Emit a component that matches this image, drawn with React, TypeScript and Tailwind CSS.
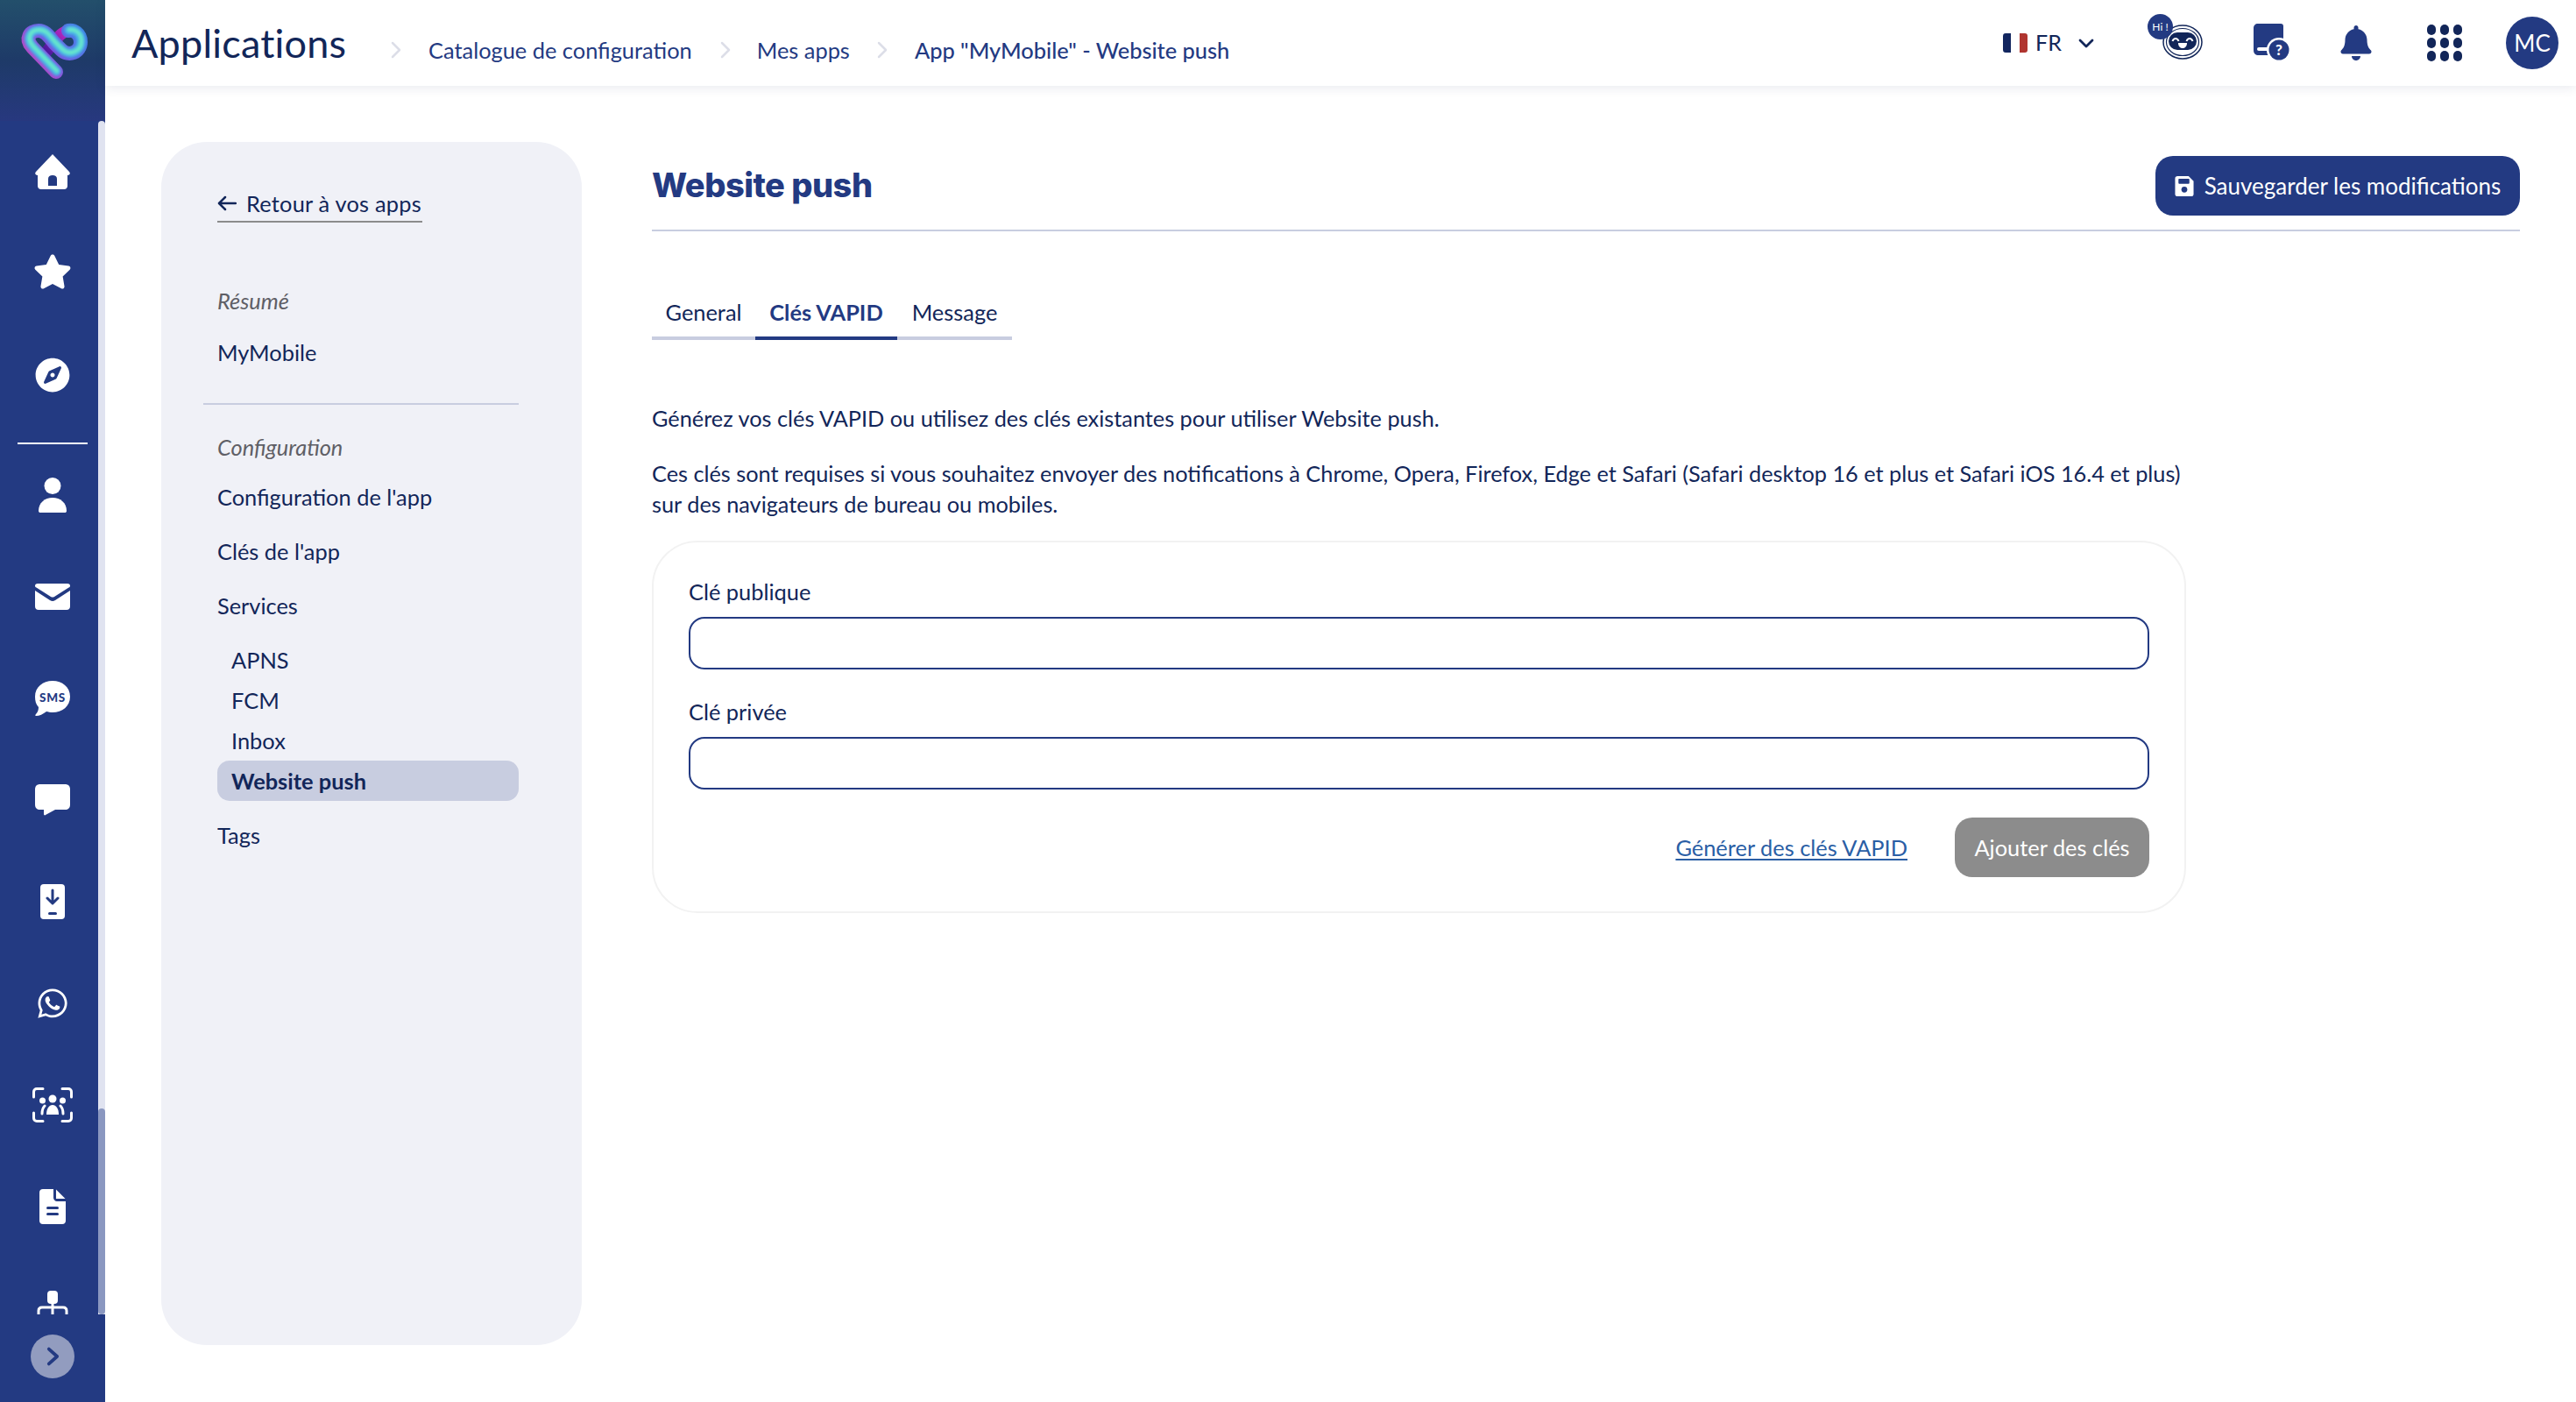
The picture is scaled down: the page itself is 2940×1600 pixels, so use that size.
import React from "react";
import { FaStar, FaCompass, FaWhatsapp, FaBell } from "react-icons/fa";

const font = { fontFamily: '"Lato", sans-serif' };

const FRONT = "M64 82 L37 54 C28 44 34 35 44 35 C52 35 56 42 62 49 L70 57 C78 65 92 60 92 48 C92 38 84 34 78 35";

function Logo() {
  return (
    <svg viewBox="0 0 130 130" className="w-[130px] h-[130px] shrink-0">
      <defs>
        <linearGradient id="edge" gradientUnits="userSpaceOnUse" x1="30" y1="85" x2="95" y2="35">
          <stop offset="0" stopColor="#e23fb4" />
          <stop offset="0.45" stopColor="#7a55e0" />
          <stop offset="1" stopColor="#3f7fe6" />
        </linearGradient>
        <linearGradient id="back" gradientUnits="userSpaceOnUse" x1="80" y1="32" x2="52" y2="58">
          <stop offset="0" stopColor="#d42cc8" />
          <stop offset="1" stopColor="#4a189c" />
        </linearGradient>
        <filter id="soft" x="-30%" y="-30%" width="160%" height="160%"><feGaussianBlur stdDeviation="1.600" /></filter>
      </defs>
      <path d="M82 36 C72 33 66 42 54 58" fill="none" stroke="url(#back)" strokeWidth="13" strokeLinecap="round" />
      <path d={FRONT} fill="none" stroke="url(#edge)" strokeWidth="16" strokeLinecap="round" strokeLinejoin="round" />
      <path d={FRONT} fill="none" stroke="#46ade8" strokeWidth="10" strokeLinecap="round" transform="translate(0.500 -0.500)" filter="url(#soft)" />
      <path d={FRONT} fill="none" stroke="#66e6cc" strokeWidth="5" strokeLinecap="round" transform="translate(1 -1)" filter="url(#soft)" />
    </svg>
  );
}

const Slot = ({ children }: { children: React.ReactNode }) => (
  <div className="h-[116px] shrink-0 flex items-center justify-center text-white">{children}</div>
);

function Sidebar() {
  return (
    <aside className="w-[120px] shrink-0 h-full flex flex-col bg-[#233a82]">
      <div className="h-[138px] shrink-0 bg-gradient-to-b from-[#234f6b] via-[#1e3a68] to-[#27387f]">
        <Logo />
      </div>
      <div className="relative h-[1362px] shrink-0 overflow-hidden">
        <Slot>
          <svg viewBox="0 0 40 40" className="w-[40px] h-[40px] -mt-[1px]" fill="currentColor">
            <path fillRule="evenodd" d="M20 0 L39 20 C40.500 21.500 40 24 37 24 L37 36 C37 38.500 35.500 40 33 40 L7 40 C4.500 40 3 38.500 3 36 L3 24 C0 24 -0.500 21.500 1 20 Z M15 36 L25 36 L25 28 C25 25.500 23 24 20 24 C17 24 15 25.500 15 28 Z" />
          </svg>
        </Slot>
        <Slot><FaStar className="w-[44px] h-[42px] -mt-[4px]" /></Slot>
        <Slot><FaCompass className="w-[40px] h-[40px]" /></Slot>
        <div className="h-[2px] w-[80px] ml-[20px] mt-[19px] bg-white" />
        <Slot>
          <svg viewBox="0 0 32 40" className="w-[32px] h-[40px]" fill="currentColor">
            <ellipse cx="16" cy="9.500" rx="9.500" ry="9.500" />
            <path d="M0 38 C0 29 7 23 16 23 C25 23 32 29 32 38 C32 39.500 31 40 30 40 H2 C1 40 0 39.500 0 38 Z" />
          </svg>
        </Slot>
        <Slot>
          <svg viewBox="0 0 40 30" className="w-[40px] h-[30px]" fill="currentColor">
            <path d="M3 0 H37 C39 0 40 1 40 2.500 C40 3.500 39.500 4 38.500 4.600 L22 15 C20.700 15.800 19.300 15.800 18 15 L1.500 4.600 C0.500 4 0 3.500 0 2.500 C0 1 1 0 3 0 Z" />
            <path d="M0 8 L17 19 C19 20.200 21 20.200 23 19 L40 8 V26 C40 28.500 38.500 30 36 30 H4 C1.500 30 0 28.500 0 26 Z" />
          </svg>
        </Slot>
        <Slot>
          <svg viewBox="0 0 40 40" className="w-[40px] h-[40px]">
            <path fill="#fff" d="M20 0 C31 0 40 7 40 18 C40 29 31 36 20 36 C17.500 36 15 35.500 13 35 C9 38 5 40 1 40 C0 40 0 39 1 38 C3 36 4 33 4 30 C1 27 0 23 0 18 C0 7 9 0 20 0 Z" />
            <text x="20" y="23.500" textAnchor="middle" fontSize="13.500" fontWeight="900" fill="#233a82" fontFamily="Lato, sans-serif" letterSpacing="0.800">SMS</text>
          </svg>
        </Slot>
        <Slot>
          <svg viewBox="0 0 40 41" className="w-[40px] h-[41px] mt-[4px]" fill="currentColor">
            <path d="M6 0 H34 C38 0 40 2 40 6 V23 C40 27 38 29 34 29 H23 L12 35 C11 36 10 35 10 34 V29 H6 C2 29 0 27 0 23 V6 C0 2 2 0 6 0 Z" />
          </svg>
        </Slot>
        <Slot>
          <svg viewBox="0 0 28 40" className="w-[28px] h-[40px]">
            <rect width="28" height="40" rx="4" fill="#fff" />
            <path d="M14 7 V21 M8 16 L14 22 L20 16" stroke="#233a82" strokeWidth="3" strokeLinecap="round" strokeLinejoin="round" fill="none" />
            <rect x="9" y="32" width="10" height="3" rx="1.500" fill="#233a82" />
          </svg>
        </Slot>
        <Slot><FaWhatsapp className="w-[38px] h-[38px]" /></Slot>
        <Slot>
          <svg viewBox="0 0 46 40" className="w-[46px] h-[40px]" fill="none">
            <path d="M1.500 11 V5 C1.500 3 3 1.500 5 1.500 H12 M34 1.500 H41 C43 1.500 44.500 3 44.500 5 V11 M1.500 29 V35 C1.500 37 3 38.500 5 38.500 H12 M34 38.500 H41 C43 38.500 44.500 37 44.500 35 V29" stroke="#fff" strokeWidth="3" strokeLinecap="round" />
            <circle cx="23" cy="13" r="4.500" fill="#fff" />
            <circle cx="11.500" cy="15" r="3.500" fill="#fff" />
            <circle cx="34.500" cy="15" r="3.500" fill="#fff" />
            <path d="M16 31 C16 24 19 20 23 20 C27 20 30 24 30 31 Z" fill="#fff" />
            <path d="M11 30 C11 26 12 23 14 21 M35 30 C35 26 34 23 32 21" stroke="#fff" strokeWidth="3" strokeLinecap="round" />
          </svg>
        </Slot>
        <Slot>
          <svg viewBox="0 0 30 40" className="w-[30px] h-[40px]">
            <path d="M4 0 H16 V10 C16 12 18 14 20 14 H30 V36 C30 38.500 28.500 40 26 40 H4 C1.500 40 0 38.500 0 36 V4 C0 1.500 1.500 0 4 0 Z" fill="#fff" />
            <path d="M19 0.500 L29.500 11 H19 Z" fill="#fff" />
            <rect x="8" y="20" width="14" height="3" rx="1.500" fill="#233a82" />
            <rect x="8" y="27" width="14" height="3" rx="1.500" fill="#233a82" />
          </svg>
        </Slot>
        <Slot>
          <svg viewBox="0 0 36 40" className="w-[36px] h-[40px]" fill="none">
            <rect x="12" y="0" width="12" height="15" rx="4" fill="#fff" />
            <path d="M18 14 V34 M2 30 V23 C2 20.500 3.500 19 6 19 H30 C32.500 19 34 20.500 34 23 V30" stroke="#fff" strokeWidth="3" />
          </svg>
        </Slot>
        <div className="absolute right-0 top-0 w-[8px] h-full rounded-t-[4px] bg-[#e0e3f0]" />
        <div className="absolute right-0 bottom-0 w-[8px] h-[235px] rounded-[4px] bg-[#8a97c0]" />
      </div>
      <div className="flex-1 flex items-center justify-center">
        <div className="w-[50px] h-[50px] rounded-full bg-[#929cbf] flex items-center justify-center -mt-[4px]">
          <svg viewBox="0 0 16 24" className="w-[15px] h-[24px]" fill="none"><path d="M3 3 L13 12 L3 21" stroke="#233a82" strokeWidth="4" strokeLinecap="round" strokeLinejoin="round" /></svg>
        </div>
      </div>
    </aside>
  );
}

const Crumb = () => (
  <svg viewBox="0 0 12 20" className="w-[12px] h-[20px] shrink-0"><path d="M2 2 L10 10 L2 18" fill="none" stroke="#dcdee8" strokeWidth="2.500" strokeLinecap="round" strokeLinejoin="round" /></svg>
);

function Header() {
  return (
    <header className="h-[98px] shrink-0 bg-white shadow-[0_2px_12px_rgba(30,40,90,0.10)] flex items-center relative z-10">
      <h1 className="ml-[30px] text-[45px] leading-[56px] -mt-[1px] text-[#122659] w-[296px] tracking-[0.2px]">Applications</h1>
      <div className="flex items-center text-[25.400px] text-[#233a82] mt-[16px]">
        <Crumb />
        <span className="ml-[31px]">Catalogue de configuration</span>
        <span className="ml-[32px]"><Crumb /></span>
        <span className="ml-[30px]">Mes apps</span>
        <span className="ml-[31px]"><Crumb /></span>
        <span className="ml-[31px] font-medium">App "MyMobile" - Website push</span>
      </div>
      <div className="ml-auto flex items-center text-[#122659]">
        <div className="w-[28px] h-[22px] rounded-[3px] overflow-hidden flex -mt-[1px]">
          <div className="flex-1 bg-[#12265f]" />
          <div className="flex-1 bg-white" />
          <div className="flex-1 bg-[#b03530]" />
        </div>
        <span className="ml-[9px] text-[25px] w-[49px]">FR</span>
        <svg viewBox="0 0 18 11" className="w-[18px] h-[11px] mr-[78px]"><path d="M2 2 L9 9 L16 2" fill="none" stroke="#122659" strokeWidth="2.800" strokeLinecap="round" strokeLinejoin="round" /></svg>
        <div className="relative w-[46px] h-[40px] mt-[-2px] mr-[58px]">
          <svg viewBox="0 0 46 40" className="w-[46px] h-[40px]">
            <ellipse cx="23" cy="20" rx="22" ry="19" fill="none" stroke="#122659" strokeWidth="1.500" />
            <ellipse cx="23" cy="20" rx="18.500" ry="15.500" fill="none" stroke="#122659" strokeWidth="1.200" />
            <rect x="7" y="9" width="32" height="20" rx="10" fill="#122659" />
            <path d="M11.500 19 C13 15 17 15 18.500 19 M27.500 19 C29 15 33 15 34.500 19" stroke="#fff" strokeWidth="2" fill="none" />
            <path d="M18 21 H28 C28 25 25.500 27 23 27 C20.500 27 18 25 18 21 Z" fill="#fff" />
          </svg>
          <div className="absolute -left-[17px] -top-[12px] w-[29px] h-[29px] rounded-full bg-[#233a82] text-white text-[12px] flex items-center justify-center">Hi !</div>
        </div>
        <svg viewBox="0 0 42 44" className="w-[42px] h-[44px] mr-[57px]">
          <path d="M5 0 H31 C33 0 34 1 34 3 V36 H6 C2 36 0 34 0 30 V5 C0 2 2 0 5 0 Z" fill="#233a82" />
          <rect x="4" y="27" width="14" height="4" rx="2" fill="#fff" />
          <circle cx="29" cy="30" r="14" fill="#fff" />
          <circle cx="29" cy="30" r="11.500" fill="#233a82" />
          <text x="29" y="36" textAnchor="middle" fontSize="17" fontWeight="900" fill="#fff" fontFamily="Lato, sans-serif">?</text>
        </svg>
        <FaBell className="w-[36px] h-[40px] text-[#233a82] mr-[63px]" />
        <div className="grid grid-cols-3 gap-x-[5px] gap-y-[3px] w-[40px] mr-[50px]">
          {Array.from({ length: 9 }).map((_, i) => (
            <div key={i} className="w-[10px] h-[12px] rounded-full bg-[#122659]" />
          ))}
        </div>
        <div className="w-[60px] h-[60px] rounded-full bg-[#233a82] text-white flex items-center justify-center text-[26px] mr-[20px]">MC</div>
      </div>
    </header>
  );
}

const Row = ({ children, className = "" }: { children: React.ReactNode; className?: string }) => (
  <div className={"h-[46px] flex items-center " + className}>{children}</div>
);

function Panel() {
  return (
    <nav className="w-[480px] h-[1373px] shrink-0 rounded-[52px] bg-[#f0f1f7] pt-[50px] pl-[64px] pr-[72px] text-[25.400px] text-[#122659]">
      <div className="h-[42px] w-[234px] border-b-2 border-[#8c8c8c] flex items-center gap-[11px]">
        <svg viewBox="0 0 22 18" className="w-[22px] h-[18px]"><path d="M21 9 H3 M9 2 L2 9 L9 16" fill="none" stroke="#122659" strokeWidth="2.500" strokeLinecap="round" strokeLinejoin="round" /></svg>
        <span className="tracking-[0.2px]">Retour à vos apps</span>
      </div>
      <Row className="mt-[66px] italic text-[#5f5f66]">Résumé</Row>
      <Row className="mt-[13px]">MyMobile</Row>
      <div className="h-[2px] -ml-[16px] mt-[35px] bg-[#c8cde0]" />
      <Row className="mt-[25px] italic text-[#5f5f66]">Configuration</Row>
      <Row className="mt-[11px]">Configuration de l'app</Row>
      <Row className="mt-[16px]">Clés de l'app</Row>
      <Row className="mt-[16px]">Services</Row>
      <div className="mt-[16px] flex flex-col">
        <Row className="pl-[16px]">APNS</Row>
        <Row className="pl-[16px]">FCM</Row>
        <Row className="pl-[16px]">Inbox</Row>
        <Row className="pl-[16px] rounded-[14px] bg-[#c8cde0] font-bold">Website push</Row>
      </div>
      <Row className="mt-[16px]">Tags</Row>
    </nav>
  );
}

const Field = ({ label, className = "" }: { label: string; className?: string }) => (
  <div className={className}>
    <div className="h-[34px] flex items-center text-[25.400px] text-[#122659]">{label}</div>
    <div className="mt-[12px] h-[60px] rounded-[18px] border-2 border-[#233a82] bg-white" />
  </div>
);

function Content() {
  return (
    <section className="flex-1 min-w-0">
      <div className="pt-[16px] pb-[16px] flex items-center justify-between border-b-2 border-[#c8cde0] h-[102px]">
        <h2 className="text-[38px] font-extrabold text-[#233a82] tracking-[-0.5px] -mt-[2px]" style={{ fontFamily: '"Inter", sans-serif' }}>Website push</h2>
        <button className="w-[416px] h-[68px] rounded-[20px] bg-[#233a82] text-white text-[26px] flex items-center justify-center gap-[12px]">
          <svg viewBox="0 0 22 24" className="w-[22px] h-[23px]">
            <path d="M3 0 H16 L22 6 V21 C22 23 21 24 19 24 H3 C1 24 0 23 0 21 V3 C0 1 1 0 3 0 Z" fill="#fff" />
            <rect x="4" y="3" width="13" height="6" rx="1" fill="#233a82" />
            <circle cx="11" cy="16" r="3.500" fill="#233a82" />
          </svg>
          Sauvegarder les modifications
        </button>
      </div>
      <div className="mt-[68px] flex text-[25.400px] text-[#122659] w-[411px] h-[56px]">
        <div className="w-[118px] flex items-center justify-center border-b-4 border-[#c8cde0] pb-[4px]">General</div>
        <div className="w-[162px] flex items-center justify-center border-b-4 border-[#233a82] font-bold text-[#233a82] pb-[4px]">Clés VAPID</div>
        <div className="flex-1 flex items-center justify-center border-b-4 border-[#c8cde0] pb-[4px]">Message</div>
      </div>
      <div className="mt-[72px] text-[25.300px] leading-[35px] text-[#122659] w-[1760px]">
        <p>Générez vos clés VAPID ou utilisez des clés existantes pour utiliser Website push.</p>
        <p className="mt-[28px]">Ces clés sont requises si vous souhaitez envoyer des notifications à Chrome, Opera, Firefox, Edge et Safari (Safari desktop 16 et plus et Safari iOS 16.4 et plus)<br />sur des navigateurs de bureau ou mobiles.</p>
      </div>
      <div className="mt-[24px] w-[1751px] h-[425px] rounded-[52px] border-2 border-[#f2f2f2] px-[40px] pt-[39px]">
        <Field label="Clé publique" />
        <Field label="Clé privée" className="mt-[31px]" />
        <div className="mt-[32px] flex items-center justify-end">
          <a className="text-[25.400px] text-[#2a5ea5] underline underline-offset-[3px] mr-[54px]">Générer des clés VAPID</a>
          <button className="w-[222px] h-[68px] rounded-[20px] bg-[#8c8c8c] text-white text-[25.400px]">Ajouter des clés</button>
        </div>
      </div>
    </section>
  );
}

export default function App() {
  return (
    <div className="w-screen h-screen flex overflow-hidden bg-white" style={font}>
      <Sidebar />
      <div className="flex-1 min-w-0 flex flex-col">
        <Header />
        <main className="flex-1 flex pl-[64px] pr-[64px] pt-[64px] gap-[80px] min-h-0">
          <Panel />
          <Content />
        </main>
      </div>
    </div>
  );
}
